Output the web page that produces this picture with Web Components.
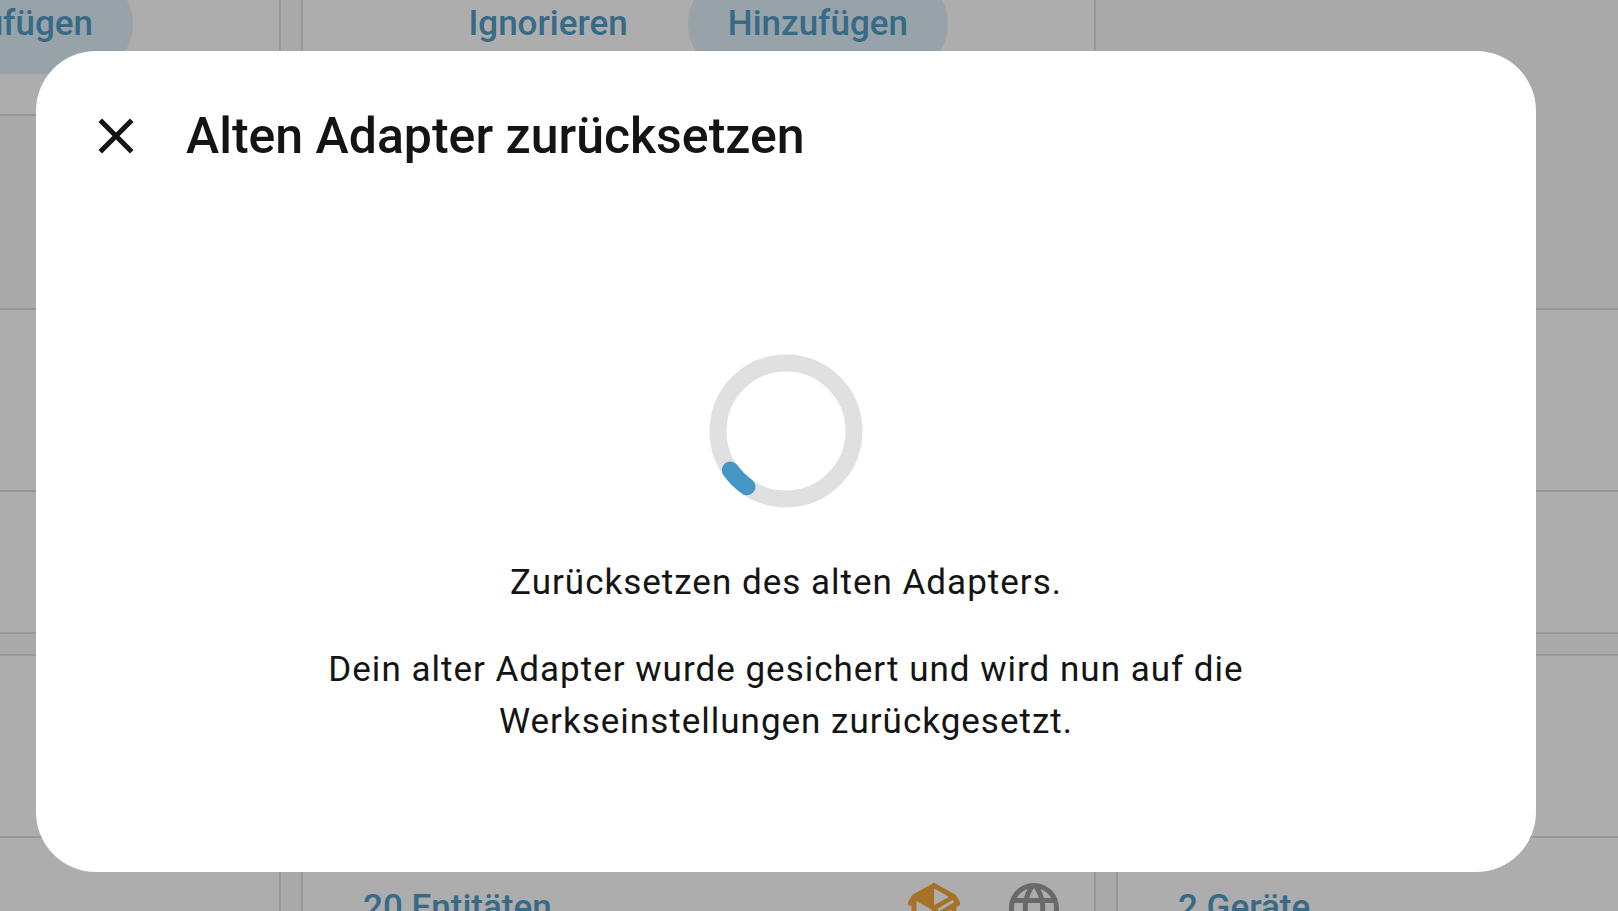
<!DOCTYPE html>
<html lang="de">
<head>
<meta charset="utf-8">
<meta name="viewport" content="width=device-width, initial-scale=1">
<title>Alten Adapter zurücksetzen</title>
<style>
  :root {
    --primary: #4496c3;
    --accent-text: #529dc6;
    --text: #141414;
    --page: #fafafa;
    --card: #ffffff;
    --divider: #e0e0e0;
  }
  html, body { height: 100%; margin: 0; overflow: hidden; }
  body {
    background: var(--page);
    color: var(--text);
    font-family: Roboto, "Noto Sans", sans-serif;
    font-size: 35px;
    line-height: 52px;
  }
</style>
</head>
<body>
<integrations-page></integrations-page>
<reset-dialog heading="Alten Adapter zurücksetzen">
  <progress-ring></progress-ring>
  <p>Zurücksetzen des alten Adapters.</p>
  <p>Dein alter Adapter wurde gesichert und wird nun auf die Werkseinstellungen zurückgesetzt.</p>
</reset-dialog>

<script>
const ICONS = {
  close: "M19,6.41L17.59,5L12,10.59L6.41,5L5,6.41L10.59,12L5,17.59L6.41,19L12,13.41L17.59,19L19,17.59L13.41,12L19,6.41Z",
  package: "M2,10.96C1.5,10.68 1.35,10.07 1.63,9.59L3.13,7C3.24,6.8 3.41,6.66 3.6,6.58L11.43,2.18C11.59,2.06 11.79,2 12,2C12.21,2 12.41,2.06 12.57,2.18L20.47,6.62C20.66,6.72 20.82,6.88 20.91,7.08L22.36,9.6C22.64,10.08 22.47,10.69 22,10.96L21,11.54V16.5C21,16.88 20.79,17.21 20.47,17.38L12.57,21.82C12.41,21.94 12.21,22 12,22C11.79,22 11.59,21.94 11.43,21.82L3.53,17.38C3.21,17.21 3,16.88 3,16.5V10.96C2.7,11.13 2.32,11.14 2,10.96M12,4.15V4.15L12,10.85V10.85L17.96,7.5L12,4.15M5,15.91L11,19.29V12.58L5,9.21V15.91M19,15.91V12.69L14,15.59C13.67,15.77 13.3,15.76 13,15.6V19.29L19,15.91M13.85,13.36L20.13,9.73L19.55,8.72L13.27,12.35L13.85,13.36Z",
  web: "M16.36,14C16.44,13.34 16.5,12.68 16.5,12C16.5,11.32 16.44,10.66 16.36,10H19.74C19.9,10.64 20,11.31 20,12C20,12.69 19.9,13.36 19.74,14M14.59,19.56C15.19,18.45 15.65,17.25 15.97,16H18.92C17.96,17.65 16.43,18.93 14.59,19.56M14.34,14H9.66C9.56,13.34 9.5,12.68 9.5,12C9.5,11.32 9.56,10.65 9.66,10H14.34C14.43,10.65 14.5,11.32 14.5,12C14.5,12.68 14.43,13.34 14.34,14M12,19.96C11.17,18.76 10.5,17.43 10.09,16H13.91C13.5,17.43 12.83,18.76 12,19.96M8,8H5.08C6.03,6.34 7.57,5.06 9.4,4.44C8.8,5.55 8.35,6.75 8,8M5.08,16H8C8.35,17.25 8.8,18.45 9.4,19.56C7.57,18.93 6.03,17.65 5.08,16M4.26,14C4.1,13.36 4,12.69 4,12C4,11.31 4.1,10.64 4.26,10H7.64C7.56,10.66 7.5,11.32 7.5,12C7.5,12.68 7.56,13.34 7.64,14M12,4.03C12.83,5.23 13.5,6.57 13.91,8H10.09C10.5,6.57 11.17,5.23 12,4.03M18.92,8H15.97C15.65,6.75 15.19,5.55 14.59,4.44C16.43,5.07 17.96,6.34 18.92,8M12,2C6.47,2 2,6.5 2,12A10,10 0 0,0 12,22A10,10 0 0,0 22,12A10,10 0 0,0 12,2Z",
};

class MdiIcon extends HTMLElement {
  connectedCallback() {
    const root = this.shadowRoot || this.attachShadow({ mode: "open" });
    root.innerHTML = `
<style>
:host{ display:block; flex:none; width:60px; height:60px; }
svg{ display:block; width:100%; height:100%; fill:currentColor; }
</style>
<svg viewBox="0 0 24 24" aria-hidden="true"><path d="${ICONS[this.getAttribute("name")]}"/></svg>`;
  }
}
customElements.define("mdi-icon", MdiIcon);

class PillButton extends HTMLElement {
  constructor() {
    super();
    this.attachShadow({ mode: "open" }).innerHTML = `
<style>
:host{ display:block; flex:none; }
button{
  height:100px; padding:0 40px; border:0; border-radius:50px;
  background:none; color:var(--accent-text);
  font:inherit; font-weight:500; white-space:nowrap; cursor:pointer;
}
:host([filled]) button{ background:#e0f0f9; }
</style>
<button type="button"><slot></slot></button>`;
  }
}
customElements.define("pill-button", PillButton);

// Card with a header area, a divider and a row of actions.
class IntegrationCard extends HTMLElement {
  constructor() {
    super();
    this.attachShadow({ mode: "open" }).innerHTML = `
<style>
:host{
  display:flex; flex-direction:column; box-sizing:border-box; min-width:0;
  background:var(--card); border:2px solid var(--divider);
}
:host([edge="left"]){ border-left:0; }
:host([edge="right"]){ border-right:0; }
.head{ height:180px; border-bottom:2px solid var(--divider); }
.actions{
  display:flex; align-items:center; gap:40px;
  min-height:100px; padding:20px 30px 20px 20px;
}
::slotted(pill-button){ margin-right:auto; }
</style>
<div class="head"></div>
<div class="actions"><slot></slot></div>`;
  }
}
customElements.define("integration-card", IntegrationCard);

class IntegrationsPage extends HTMLElement {
  constructor() {
    super();
    this.attachShadow({ mode: "open" }).innerHTML = `
<style>
:host{ display:block; height:100vh; overflow:hidden; }
.grid{ display:grid; grid-template-columns:281fr 795fr 502fr; column-gap:20px; row-gap:20px; }
.discovered{ height:116px; margin-bottom:192px; }
.found{
  display:flex; justify-content:flex-end; align-items:flex-end; gap:20px;
  box-sizing:border-box; min-width:0; overflow:hidden;
  padding:0 146px 40px 0;
  background:var(--card); border:2px solid var(--divider); border-top:0;
}
.found.first{ border-left:0; }
.integrations{ grid-template-rows:326px 326px; }
.package{ color:#f5a93a; }
.web{ color:#9b9b9b; }
</style>
<section class="grid discovered">
  <div class="found first"><pill-button filled>Hinzufügen</pill-button></div>
  <div class="found">
    <pill-button>Ignorieren</pill-button>
    <pill-button filled>Hinzufügen</pill-button>
  </div>
</section>
<section class="grid integrations">
  <integration-card edge="left"></integration-card>
  <integration-card></integration-card>
  <integration-card edge="right"></integration-card>
  <integration-card edge="left"></integration-card>
  <integration-card>
    <pill-button>20 Entitäten</pill-button>
    <mdi-icon class="package" name="package"></mdi-icon>
    <mdi-icon class="web" name="web"></mdi-icon>
  </integration-card>
  <integration-card edge="right"><pill-button>2 Geräte</pill-button></integration-card>
</section>`;
  }
}
customElements.define("integrations-page", IntegrationsPage);

class ProgressRing extends HTMLElement {
  constructor() {
    super();
    this.attachShadow({ mode: "open" }).innerHTML = `
<style>
:host{ display:block; width:154px; height:154px; }
svg{ display:block; fill:none; stroke-width:17; }
</style>
<svg width="154" height="154" viewBox="0 0 154 154" role="progressbar" aria-label="Wird zurückgesetzt">
  <circle cx="77" cy="77" r="68" stroke="#e0e0e0"/>
  <path d="M38 132.7A68 68 0 0 1 21.3 116" stroke="var(--primary)" stroke-linecap="round"/>
</svg>`;
  }
}
customElements.define("progress-ring", ProgressRing);

class ResetDialog extends HTMLElement {
  constructor() {
    super();
    this.attachShadow({ mode: "open" }).innerHTML = `
<style>
:host{
  position:fixed; inset:0; z-index:8;
  display:grid; align-items:start; box-sizing:border-box;
  padding:51px 82px 39px 36px;
  background:rgba(0,0,0,.32);
}
.surface{ background:#fff; border-radius:60px; }
header{ display:flex; align-items:center; gap:10px; padding:25px 20px; }
header button{
  display:grid; place-items:center; flex:none;
  width:120px; height:120px; padding:0; border:0; border-radius:50%;
  background:none; color:inherit; cursor:pointer;
}
h1{ margin:0; font-size:50px; line-height:60px; font-weight:500; }
.content{
  display:flex; flex-direction:column; align-items:center;
  padding:133px 150px 124px; text-align:center; letter-spacing:1px;
}
::slotted(progress-ring){ margin-bottom:14px; }
::slotted(p){ margin:35px 0 0; }
</style>
<div class="surface" role="dialog" aria-modal="true" aria-labelledby="title">
  <header>
    <button type="button" aria-label="Schließen"><mdi-icon name="close"></mdi-icon></button>
    <h1 id="title"></h1>
  </header>
  <div class="content"><slot></slot></div>
</div>`;
  }
  connectedCallback() {
    this.shadowRoot.querySelector("h1").textContent = this.getAttribute("heading");
    this.shadowRoot.querySelector("button").addEventListener("click", () => this.remove());
  }
}
customElements.define("reset-dialog", ResetDialog);
</script>
</body>
</html>
